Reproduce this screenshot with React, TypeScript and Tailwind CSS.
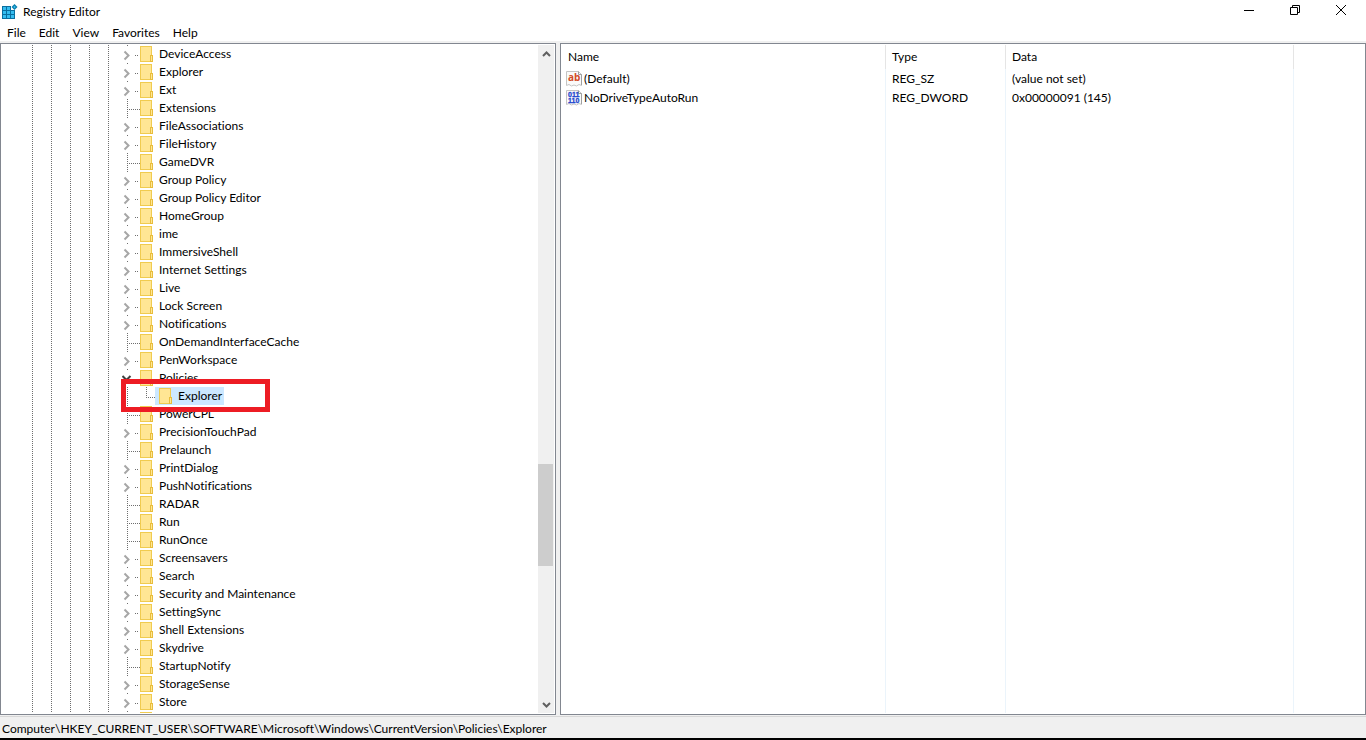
import { ReactNode } from 'react';

type Branch = 'closed' | 'open' | 'leaf';

interface TreeKey {
  name: string;
  branch: Branch;
}

const keys: TreeKey[] = [
  { name: 'DeviceAccess', branch: 'closed' },
  { name: 'Explorer', branch: 'closed' },
  { name: 'Ext', branch: 'closed' },
  { name: 'Extensions', branch: 'leaf' },
  { name: 'FileAssociations', branch: 'closed' },
  { name: 'FileHistory', branch: 'closed' },
  { name: 'GameDVR', branch: 'leaf' },
  { name: 'Group Policy', branch: 'closed' },
  { name: 'Group Policy Editor', branch: 'closed' },
  { name: 'HomeGroup', branch: 'closed' },
  { name: 'ime', branch: 'closed' },
  { name: 'ImmersiveShell', branch: 'closed' },
  { name: 'Internet Settings', branch: 'closed' },
  { name: 'Live', branch: 'closed' },
  { name: 'Lock Screen', branch: 'closed' },
  { name: 'Notifications', branch: 'closed' },
  { name: 'OnDemandInterfaceCache', branch: 'leaf' },
  { name: 'PenWorkspace', branch: 'closed' },
  { name: 'Policies', branch: 'open' },
  { name: 'PowerCPL', branch: 'leaf' },
  { name: 'PrecisionTouchPad', branch: 'closed' },
  { name: 'Prelaunch', branch: 'leaf' },
  { name: 'PrintDialog', branch: 'closed' },
  { name: 'PushNotifications', branch: 'closed' },
  { name: 'RADAR', branch: 'leaf' },
  { name: 'Run', branch: 'leaf' },
  { name: 'RunOnce', branch: 'leaf' },
  { name: 'Screensavers', branch: 'closed' },
  { name: 'Search', branch: 'closed' },
  { name: 'Security and Maintenance', branch: 'closed' },
  { name: 'SettingSync', branch: 'closed' },
  { name: 'Shell Extensions', branch: 'closed' },
  { name: 'Skydrive', branch: 'closed' },
  { name: 'StartupNotify', branch: 'leaf' },
  { name: 'StorageSense', branch: 'closed' },
  { name: 'Store', branch: 'closed' },
  { name: '', branch: 'closed' },
];

const values = [
  { name: '(Default)', type: 'REG_SZ', data: '(value not set)', icon: <StringIcon /> },
  { name: 'NoDriveTypeAutoRun', type: 'REG_DWORD', data: '0x00000091 (145)', icon: <BinaryIcon /> },
];

// ===== Icons =====
function RegistryIcon() {
  return (
    <svg width="16" height="16" viewBox="0 0 16 16" aria-hidden="true">
      <path d="M0 2H9V6H13V15H0Z" fill="#0a6fa0" />
      <g fill="#35bdf0">
        <rect x="1" y="3" width="3" height="3" />
        <rect x="5" y="3" width="3" height="3" />
        <rect x="1" y="7" width="3" height="3" />
        <rect x="5" y="7" width="3" height="3" />
        <rect x="9" y="7" width="3" height="3" />
        <rect x="1" y="11" width="3" height="3" />
        <rect x="5" y="11" width="3" height="3" />
        <rect x="9" y="11" width="3" height="3" />
      </g>
      <path d="M12.5 0L15.5 3L12.5 6L9.5 3Z" fill="#0b7fae" />
      <path d="M12.5 1.8L13.7 3L12.5 4.2L11.3 3Z" fill="#35bdf0" />
    </svg>
  );
}

function FolderIcon() {
  return (
    <svg width="13" height="16" viewBox="0 0 13 16" className="shrink-0" aria-hidden="true">
      <rect x="0.5" y="0.5" width="11" height="15" fill="#ffe694" stroke="#f0cb4f" />
      <rect x="10.5" y="9.5" width="2" height="6" fill="#ffe694" stroke="#e8bd3c" />
    </svg>
  );
}

function Page({ children }: { children: ReactNode }) {
  return (
    <svg width="16" height="16" viewBox="0 0 16 16" className="shrink-0" aria-hidden="true">
      <path d="M0.5 0.5H12.5L15.5 3.5V14.5L13 13.5L10.5 15L8 14L5.5 15L3 13.5L0.5 14.5Z" fill="#fafafa" stroke="#c4c4c4" />
      <path d="M12.5 0.5V3.5H15.5V14" fill="none" stroke="#a0a0a0" />
      {children}
    </svg>
  );
}

function StringIcon() {
  return (
    <Page>
      <text x="2" y="10" fontSize="10" fontWeight="700" fontFamily="Open Sans, sans-serif" fill="#d24a26">ab</text>
    </Page>
  );
}

function BinaryIcon() {
  return (
    <Page>
      <g fontSize="7" fontWeight="700" fontFamily="Liberation Sans, sans-serif" fill="#2347cf" stroke="#2347cf" strokeWidth="0.3">
        <text x="2" y="7">011</text>
        <text x="2" y="13">110</text>
      </g>
    </Page>
  );
}

// Dotted connector plus the expand arrow, 18x18 per row
function BranchLines({ branch }: { branch: Branch }) {
  const leaf = branch === 'leaf';
  return (
    <svg width="18" height="18" viewBox="0 0 18 18" className="block" aria-hidden="true">
      <g stroke="#6e6e6e" strokeDasharray="1 1" fill="none">
        {leaf ? <path d="M5.5 0V18" /> : <path d="M5.5 0V2" />}
        {leaf ? <path d="M5 10.5H18" /> : <path d="M13 10.5H17" />}
      </g>
      {branch === 'closed' && <path d="M2.5 6.5L6.5 10.5L2.5 14.5" fill="none" stroke="#a6a6a6" strokeWidth="2" />}
      {branch === 'open' && <path d="M0.5 7L4.5 11L8.5 7" fill="none" stroke="#404040" strokeWidth="2" />}
    </svg>
  );
}

// ===== Tree =====
function Guides() {
  const dots = 'bg-[linear-gradient(#6e6e6e_50%,transparent_50%)] bg-[length:1px_2px] bg-repeat-y';
  return (
    <>
      {[0, 1, 2, 3].map((i) => (
        <span key={i} className={`w-[19px] shrink-0 self-stretch ${dots}`} />
      ))}
      <span className={`w-[14px] shrink-0 self-stretch ${dots}`} />
    </>
  );
}

function TreeRow({ name, branch }: TreeKey) {
  return (
    <div className="flex h-[18px] items-center pl-[31px]">
      <Guides />
      {branch === 'leaf' ? (
        <BranchLines branch={branch} />
      ) : (
        <button type="button" aria-label={branch === 'open' ? 'Collapse' : 'Expand'}>
          <BranchLines branch={branch} />
        </button>
      )}
      <FolderIcon />
      <span className="pl-[6px] leading-[18px] whitespace-nowrap">{name}</span>
    </div>
  );
}

function SelectedRow({ name }: { name: string }) {
  return (
    <div className="relative flex h-[18px] items-center pl-[31px]">
      <Guides />
      <svg width="33" height="18" viewBox="0 0 33 18" className="block shrink-0" aria-hidden="true">
        <g stroke="#6e6e6e" strokeDasharray="1 1" fill="none">
          <path d="M5.5 0V18" />
          <path d="M24.5 0V10" />
          <path d="M24 10.5H33" />
        </g>
      </svg>
      <span className="flex h-[18px] items-center bg-[#cce8ff] pr-[2px] pl-1 whitespace-nowrap">
        <FolderIcon />
        <span className="pl-[6px] leading-[18px]">{name}</span>
      </span>
      <span className="pointer-events-none absolute -top-2 left-[120px] h-[33px] w-[149px] border-5 border-[#ed1c24]" />
    </div>
  );
}

function ScrollBar() {
  return (
    <div className="flex w-4 shrink-0 flex-col bg-[#f0f0f0]">
      <button type="button" aria-label="Scroll up" className="flex h-[17px] items-center justify-center">
        <svg width="9" height="6" viewBox="0 0 9 6" aria-hidden="true">
          <path d="M1 5L4.5 1.5L8 5" fill="none" stroke="#606060" strokeWidth="2" />
        </svg>
      </button>
      <div className="grow-[402] basis-0" />
      <div className="mr-px grow-[102] basis-0 bg-[#cdcdcd]" />
      <div className="grow-[130] basis-0" />
      <button type="button" aria-label="Scroll down" className="flex h-[17px] items-center justify-center">
        <svg width="9" height="6" viewBox="0 0 9 6" aria-hidden="true">
          <path d="M1 1L4.5 4.5L8 1" fill="none" stroke="#606060" strokeWidth="2" />
        </svg>
      </button>
    </div>
  );
}

function KeyTree() {
  return (
    <nav aria-label="Registry keys" className="flex w-[556px] shrink-0 border border-[#828790] bg-white py-px pr-px">
      <ul className="min-w-0 flex-1 overflow-hidden">
        {keys.map((key, i) => (
          <li key={i}>
            <TreeRow {...key} />
            {key.branch === 'open' && <SelectedRow name="Explorer" />}
          </li>
        ))}
      </ul>
      <ScrollBar />
    </nav>
  );
}

// ===== Value list =====
function ValueList() {
  const head = 'h-6 border-r border-[#e5e5e5] pl-[6px] text-left font-normal';
  const cell = 'h-[19px] border-r border-[#ebf4fb] pl-[6px] whitespace-nowrap';
  return (
    <main className="flex min-w-0 flex-1 border border-[#828790] bg-white p-px">
      <table className="h-full w-full table-fixed border-separate border-spacing-0">
        <colgroup>
          <col className="w-[324px]" />
          <col className="w-[120px]" />
          <col className="w-[288px]" />
          <col />
        </colgroup>
        <thead>
          <tr>
            <th className={head}>Name</th>
            <th className={head}>Type</th>
            <th className={head}>Data</th>
            <td />
          </tr>
        </thead>
        <tbody>
          {values.map((value) => (
            <tr key={value.name}>
              <td className="h-[19px] border-r border-[#ebf4fb] pl-1">
                <span className="flex items-center gap-[2px] leading-[18px]">
                  {value.icon}
                  {value.name}
                </span>
              </td>
              <td className={cell}>{value.type}</td>
              <td className={cell}>{value.data}</td>
              <td />
            </tr>
          ))}
          <tr className="h-full">
            <td className="border-r border-[#ebf4fb]" />
            <td className="border-r border-[#ebf4fb]" />
            <td className="border-r border-[#ebf4fb]" />
            <td />
          </tr>
        </tbody>
      </table>
    </main>
  );
}

// ===== Window frame =====
function TitleBar() {
  return (
    <header className="flex h-6 items-center bg-white pl-[2px]">
      <RegistryIcon />
      <h1 className="flex-1 pl-[5px]">Registry Editor</h1>
      <div className="flex h-5 self-start pr-[2px]">
        <button type="button" aria-label="Minimize" className="flex w-[46px] items-center justify-center">
          <svg width="10" height="10" viewBox="0 0 10 10" aria-hidden="true">
            <path d="M0 5.5H10" stroke="#000" />
          </svg>
        </button>
        <button type="button" aria-label="Restore" className="flex w-[46px] items-center justify-center">
          <svg width="10" height="10" viewBox="0 0 10 10" aria-hidden="true">
            <path d="M0.5 2.5H7.5V9.5H0.5ZM2.5 2.5V0.5H9.5V7.5H7.5" fill="none" stroke="#000" />
          </svg>
        </button>
        <button type="button" aria-label="Close" className="flex w-[46px] items-center justify-center">
          <svg width="10" height="10" viewBox="0 0 10 10" aria-hidden="true">
            <path d="M0 0L10 10M10 0L0 10" stroke="#000" />
          </svg>
        </button>
      </div>
    </header>
  );
}

function MenuBar() {
  return (
    <nav aria-label="Menu" className="flex h-[17px] items-center gap-[13px] bg-white pl-[7px]">
      <button type="button">File</button>
      <button type="button">Edit</button>
      <button type="button">View</button>
      <button type="button">Favorites</button>
      <button type="button">Help</button>
    </nav>
  );
}

export default function App() {
  return (
    <div className="flex h-screen flex-col bg-[#f0f0f0] font-['Lato','Open_Sans',sans-serif] text-[12px] leading-4 text-black [font-variant-ligatures:none]">
      <TitleBar />
      <MenuBar />
      <div className="mt-[2px] flex min-h-0 flex-1 gap-1">
        <KeyTree />
        <ValueList />
      </div>
      <footer className="mt-px h-6 border-t border-b-2 border-t-[#d7d7d7] border-b-black pl-[2px] leading-[23px]">
        Computer\HKEY_CURRENT_USER\SOFTWARE\Microsoft\Windows\CurrentVersion\Policies\Explorer
      </footer>
    </div>
  );
}
